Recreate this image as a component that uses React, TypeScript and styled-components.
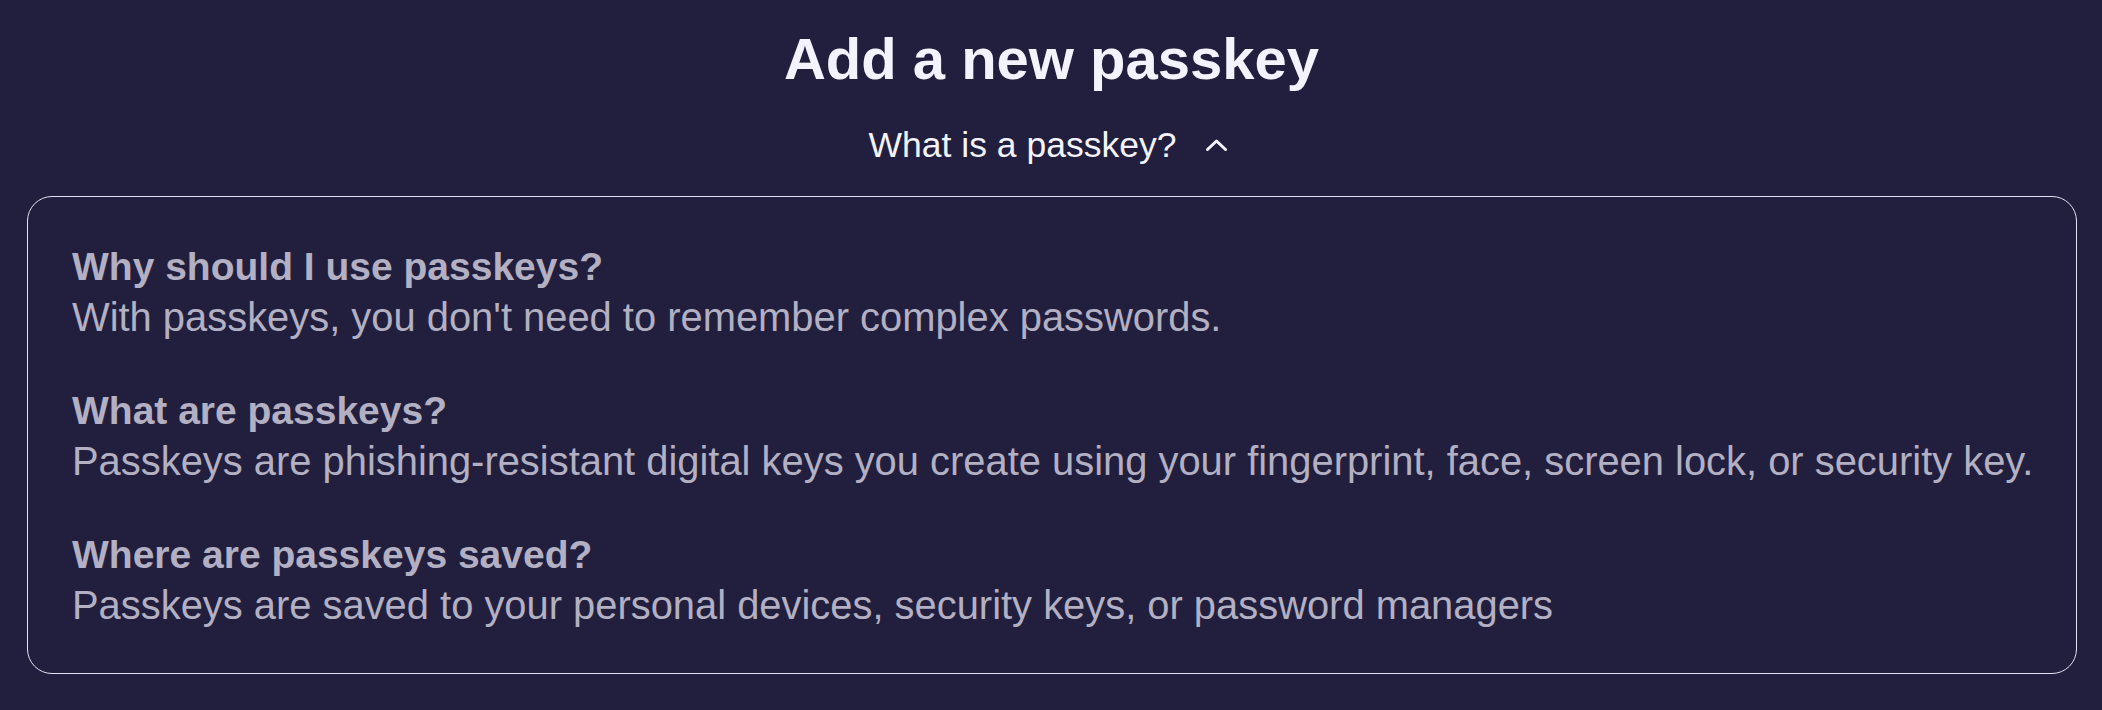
import React, { FC, useState } from 'react'
import styled, { createGlobalStyle } from 'styled-components'

const GlobalStyle = createGlobalStyle`
  html, body {
    margin: 0;
    padding: 0;
    background: #221f3e;
  }
  body {
    font-family: 'Liberation Sans', Arial, Helvetica, sans-serif;
  }
`

const Page = styled.div`
  min-height: 710px;
  box-sizing: border-box;
  padding: 24px 25px 0 27px;
  display: flex;
  flex-direction: column;
  align-items: stretch;
  background: #221f3e;
`

const Title = styled.h1`
  margin: 0;
  font-size: 58px;
  line-height: 70px;
  font-weight: 700;
  color: #f4f3fd;
  text-align: center;
  margin-left: -1px;
`

const Toggle = styled.button`
  align-self: center;
  margin: 29px 0 29px 0;
  padding: 0;
  border: 0;
  background: none;
  display: flex;
  align-items: center;
  gap: 30px;
  font-family: inherit;
  font-size: 35.5px;
  line-height: 44px;
  color: #f4f3fd;
  cursor: pointer;
  transform: translateX(-4px);
`

const Chevron = styled.svg<{ $open: boolean }>`
  width: 21px;
  height: 12px;
  transform: ${p => (p.$open ? 'none' : 'rotate(180deg)')};
  margin-top: -1px;
`

const Card = styled.div`
  border: 1px solid #e4e2f0;
  border-radius: 25px;
  padding: 45px 30px 43px 44px;
  display: flex;
  flex-direction: column;
  gap: 44px;
`

const Section = styled.div`
  display: flex;
  flex-direction: column;
  color: #b2b0c2;
`

const Question = styled.b`
  font-size: 39px;
  line-height: 50px;
  font-weight: 700;
`

const Answer = styled.span`
  font-size: 39.9px;
  line-height: 50px;
  white-space: nowrap;
`

const faq = [
  {
    q: 'Why should I use passkeys?',
    a: "With passkeys, you don't need to remember complex passwords.",
  },
  {
    q: 'What are passkeys?',
    a: 'Passkeys are phishing-resistant digital keys you create using your fingerprint, face, screen lock, or security key.',
  },
  {
    q: 'Where are passkeys saved?',
    a: 'Passkeys are saved to your personal devices, security keys, or password managers',
  },
]

const App: FC = () => {
  const [open, setOpen] = useState(true)

  return (
    <>
      <GlobalStyle />
      <Page>
        <Title>Add a new passkey</Title>
        <Toggle onClick={() => setOpen(!open)}>
          What is a passkey?
          <Chevron $open={open} viewBox="0 0 21 12" fill="none">
            <path d="M1.5 10.5 L10.5 2 L19.5 10.5" stroke="#f4f3fd" strokeWidth="3" strokeLinecap="round" strokeLinejoin="round" />
          </Chevron>
        </Toggle>
        {open && (
          <Card>
            {faq.map(item => (
              <Section key={item.q}>
                <Question>{item.q}</Question>
                <Answer>{item.a}</Answer>
              </Section>
            ))}
          </Card>
        )}
      </Page>
    </>
  )
}

export default App
